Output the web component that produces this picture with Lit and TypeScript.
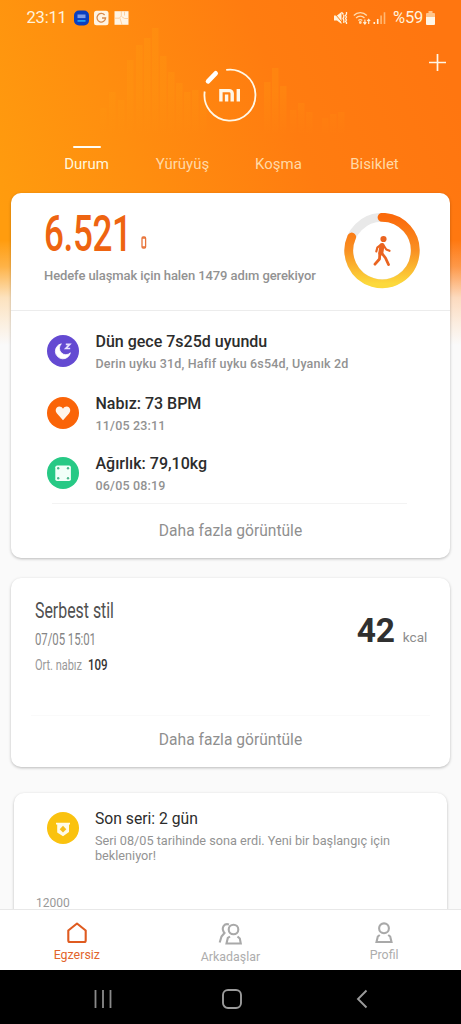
import { LitElement, html, svg, css } from "lit";
import { customElement } from "lit/decorators.js";

/** Text in a narrow face: laid out at its natural em width, then squeezed to the given width. */
const narrow = (text: string, size: number, width: number, ems: number, weight = 400) => html`
  <svg class="narrow" width=${width} height=${size} viewBox="0 0 ${size * ems} ${size}" preserveAspectRatio="none">
    <text x="0" y=${size * 0.86} font-size=${size} font-weight=${weight} textLength=${size * ems}>${text}</text>
  </svg>`;

/** [x, top] of each equaliser bar behind the logo */
const bars: number[][] = [
  [100, 108], [109, 92], [118, 100], [127, 60], [136, 45], [144, 38], [152, 28], [160, 56],
  [168, 72], [176, 83], [184, 92], [192, 90], [200, 100],
  [264, 82], [272, 68], [280, 86], [290, 110], [298, 103], [306, 112], [322, 118], [330, 114], [338, 112],
];

@customElement("app-root")
export class AppRoot extends LitElement {
  static styles = css`
    :host { display: block; font-family: Roboto, "Noto Sans", sans-serif; color: #8c8c8c; }
    * { box-sizing: border-box; }
    svg { display: block; flex: none; }
    .narrow { overflow: visible; fill: currentColor; }
    .screen { position: relative; display: flex; flex-direction: column; width: 461px; height: 1024px; overflow: hidden; background: #fafafa; }
    .backdrop { position: absolute; left: 0; top: 0; }
    .content { position: relative; height: 909px; overflow: hidden; }
    .status { display: flex; align-items: center; height: 36px; padding: 0 26px 0 26.5px; color: #fff2dc; font-size: 16.5px; line-height: 36px; }
    .clock { width: 47px; letter-spacing: -0.2px; }
    .apps { display: flex; gap: 5px; flex: 1; }
    .battery { width: 31px; margin: 0 2px 0 7px; white-space: nowrap; letter-spacing: -0.2px; }
    .head { display: flex; justify-content: flex-end; height: 109px; padding: 16px 14.5px 0 0; }
    .logo { margin: 14px 170.5px 0 0; }
    .tabs { display: grid; grid-template-columns: repeat(4, 96px); height: 47.5px; padding: 0 38.5px; font-size: 15px; color: #ffd9a6; text-align: center; }
    .tab { line-height: 20px; }
    .tab.on { color: #fff6dc; }
    .tab::before { content: ""; display: block; width: 28px; height: 2.5px; border-radius: 1px; margin: 0.5px auto 6px; }
    .tab.on::before { background: #fffdf5; }
    .card { margin: 0 11px; background: #fff; border-radius: 10px; box-shadow: 0 1px 3px rgba(0,0,0,.26); }
    .today { height: 365px; }
    .steps { display: flex; height: 118px; border-bottom: 1px solid #ececec; padding: 0 30px 0 33px; }
    .count { flex: 1; padding-top: 16px; }
    .figure { display: flex; align-items: flex-end; height: 49px; color: #ee6411; gap: 9px; }
    .band { margin-bottom: 9px; }
    .goal { margin-top: 8.5px; font-size: 13px; line-height: 20px; font-weight: 500; letter-spacing: -0.09px; color: #929292; white-space: nowrap; }
    .ring { margin-top: 20px; }
    .row { display: flex; gap: 16.5px; padding-left: 36px; height: 60px; }
    .row.first { height: 62px; }
    .title { font-size: 16px; line-height: 20px; font-weight: 500; color: #2c2c2c; margin-top: -3px; white-space: nowrap; }
    .sub { font-size: 12.5px; line-height: 16px; font-weight: 500; letter-spacing: 0.18px; color: #929292; margin-top: 3.5px; white-space: nowrap; }
    .rows { height: 192px; padding-top: 24.5px; }
    .rule { height: 1px; margin: 0 43px 0 41px; background: #f3f3f3; }
    .more { text-align: center; font-size: 15.6px; line-height: 24px; padding-top: 15.500px; color: #8f8f8f; }
    .workout { display: flex; flex-direction: column; height: 188.5px; margin-top: 20.5px; }
    .workout-top { display: flex; justify-content: space-between; height: 137px; padding: 0 22.5px 0 24px; }
    .name { color: #505050; margin-top: 20.5px; }
    .when { color: #858585; margin-top: 10.5px; }
    .pulse { display: flex; gap: 6px; color: #999; margin-top: 9.5px; }
    .pulse-value { color: #333; }
    .energy { display: flex; align-items: baseline; gap: 8px; margin-top: 33px; height: 40px; font-size: 13.5px; line-height: 40px; letter-spacing: 0.1px; }
    .kcal { font-size: 33.5px; font-weight: 700; color: #303030; letter-spacing: -0.2px; }
    .workout .rule { margin: 0 20px; background: #fafafa; }
    .workout .more { padding-top: 12px; }
    .streak { margin: 26.5px 14px 0; height: 150px; padding-top: 19px; }
    .streak .row { padding-left: 33px; gap: 16px; height: 78px; }
    .streak .title { font-weight: 400; font-size: 15.7px; margin-top: -3.5px; }
    .note { width: 320px; margin-top: 5.5px; font-size: 12.7px; line-height: 14.5px; color: #939393; }
    .axis { padding-left: 22px; font-size: 12px; line-height: 16px; color: #999; margin-top: 5px; }
    .nav { position: relative; display: grid; grid-template-columns: repeat(3, 153.67px); height: 61px; background: #fff; border-top: 1px solid #e8e8e8; font-size: 12.4px; line-height: 16px; color: #adadad; }
    .item { display: flex; flex-direction: column; align-items: center; padding-top: 12px; gap: 2.5px; }
    .item.on { color: #e2642c; }
    .item.mid { padding-top: 12.5px; gap: 4px; }
    .system { position: relative; display: flex; justify-content: space-between; align-items: center; height: 54px; background: #000; padding: 3px 93px 0 93px; }
    .system-home { margin-right: 4px; }
  `;

  private disc(color: string, glyph: unknown) {
    return html`<svg width="32" height="32" viewBox="0 0 32 32"><circle cx="16" cy="16" r="16" fill=${color}></circle>${glyph}</svg>`;
  }

  private backdrop() {
    return html`<svg class="backdrop" width="461" height="345" viewBox="0 0 461 345">
      <defs>
        <linearGradient id="warm" x1="0" y1="0.6" x2="1" y2="0.3">
          <stop offset="0" stop-color="#ff9c0e"></stop><stop offset=".3" stop-color="#ff8e0f"></stop>
          <stop offset=".65" stop-color="#ff7c10"></stop><stop offset="1" stop-color="#ff7610"></stop>
        </linearGradient>
        <linearGradient id="fade" x1="0" y1="0" x2="0" y2="1">
          <stop offset="0" stop-color="#fafafa" stop-opacity="0"></stop>
          <stop offset=".25" stop-color="#fbf6f0" stop-opacity=".25"></stop>
          <stop offset=".55" stop-color="#fbf6f0" stop-opacity=".78"></stop>
          <stop offset=".8" stop-color="#fbf6f0" stop-opacity=".93"></stop>
          <stop offset="1" stop-color="#fafafa"></stop>
        </linearGradient>
        <linearGradient id="bar" gradientUnits="userSpaceOnUse" x1="0" y1="28" x2="0" y2="135">
          <stop offset="0" stop-color="#ff9c10" stop-opacity=".3"></stop><stop offset=".6" stop-color="#ff9c10" stop-opacity=".24"></stop><stop offset="1" stop-color="#ff9c10" stop-opacity="0"></stop>
        </linearGradient>
      </defs>
      <rect width="461" height="345" fill="url(#warm)"></rect>
      ${bars.map(([x, top]) => svg`<rect x=${x} y=${top} width="6.5" height=${135 - top} fill="url(#bar)"></rect>`)}
      <rect y="240" width="461" height="105" fill="url(#fade)"></rect>
    </svg>`;
  }

  private status() {
    return html`<div class="status">
      <span class="clock">23:11</span>
      <div class="apps">
        <svg width="15" height="16" viewBox="0 0 15 16"><rect y=".5" width="15" height="15" rx="5" fill="#0b3fc0"></rect><rect x="3.5" y="4.5" width="8" height="3.6" fill="#7f9ce6"></rect><rect x="3.5" y="10" width="8" height="1.8" fill="#1fa0f5"></rect></svg>
        <svg width="15" height="16" viewBox="0 0 15 16"><rect y=".8" width="14.5" height="14.4" rx="2.5" fill="#fff4e4"></rect><path d="M10.6 5A4.3 4.3 0 1 0 11.6 8H8" fill="none" stroke="#d88a4c" stroke-width="1.3"></path></svg>
        <svg width="15" height="16" viewBox="0 0 15 16"><path d="M.5 1.2h14v13.6H.5z" fill="#fff4e4"></path><path d="M7.3 1v5l-2 2.2H.5M6 8.2l2 6.6M7.5 6.5l3 2h4M10.5 1.5v4" fill="none" stroke="#ffc68d" stroke-width=".8"></path></svg>
      </div>
      <svg width="20" height="16" viewBox="0 0 20 16" fill="#fff2dc"><path d="M1 5.500h3L8.500 2v12L4 10.500H1z"></path><path d="M0 1.500l11 13" stroke="#ff8010" stroke-width="1"></path><path d="M8.500 2.200l2 2.300" stroke="#fff2dc" stroke-width="1.300"></path><path d="M10.800 5v2l-.8 1.500.8 1.500v3M13.500 2v2l-1 1.500 1 1.500-1 1.500 1 1.500-1 1.500 1 1V14" fill="none" stroke="#fff2dc" stroke-width="1.300"></path></svg>
      <svg width="20" height="16" viewBox="0 0 20 16" fill="none" stroke="#ffdcae" stroke-width="1.300"><path d="M.8 5.500a9 9 0 0 1 13 0M3.100 8a5.800 5.800 0 0 1 8.400 0M5.300 10.500a3 3 0 0 1 4 0"></path><circle cx="7.300" cy="12.500" r=".8" fill="#fff2dc"></circle><path d="M11.900 9.500v4.300M10.400 12.200l1.500 1.800 1.400-1.800M15.700 14V9.500M14.200 11l1.500-1.700 1.500 1.700" stroke="#fff2dc" stroke-width="1.100"></path></svg>
      <svg width="13" height="16" viewBox="0 0 13 16"><path d="M.5 12h1.600v2H.5zM3.900 9h1.600v5H3.900z" fill="#fff2dc"></path><path d="M7.300 5.500h1.600V14H7.300zM10.700 2.200h1.600V14h-1.600z" fill="#ffb873"></path></svg>
      <span class="battery">%59</span>
      <svg width="9" height="16" viewBox="0 0 9 16"><path d="M2.500 1h4v2H8a1 1 0 0 1 1 1v3H0V4a1 1 0 0 1 1-1h1.500z" fill="#ffc48a"></path><path d="M0 7h9v7a1 1 0 0 1-1 1H1a1 1 0 0 1-1-1z" fill="#fff6e8"></path></svg>
    </div>`;
  }

  render() {
    return html`<div class="screen">
      ${this.backdrop()}
      <div class="content">
        ${this.status()}
        <div class="head">
          <svg class="logo" width="56" height="58" viewBox="202 66 56 58">
            <path d="M227.200 69.900A25.500 25.500 0 1 1 205.700 91.500" fill="none" stroke="#fff8e8" stroke-width="1.800"></path>
            <path d="M209 81.300L216.700 73.300" stroke="#fff" stroke-width="4.600" stroke-linecap="round"></path>
            <path d="M221.900 101.500V90.600H230.200a3 3 0 0 1 3 3v7.900M227.600 94.500v7M239.300 89v12.500" fill="none" stroke="#fff6e6" stroke-width="3.400"></path>
          </svg>
          <svg width="19" height="20" viewBox="0 0 19 20"><path d="M9.500 2v17M1 10.500h17" stroke="#fff6e6" stroke-width="1.700"></path></svg>
        </div>
        <div class="tabs">
          ${["Durum", "Yürüyüş", "Koşma", "Bisiklet"].map((name, i) => html`<div class="tab ${i ? "" : "on"}">${name}</div>`)}
        </div>

        <section class="card today">
          <div class="steps">
            <div class="count">
              <div class="figure">
                ${narrow("6.521", 50, 88, 2.51, 500)}
                <svg class="band" width="6" height="13" viewBox="0 0 6 13"><rect x="1" y="1" width="3.600" height="11" rx="1.200" fill="#fff" stroke="#e8743a" stroke-width="1.300"></rect><path d="M1 2h3.600M1 11h3.600" stroke="#e8743a" stroke-width="1.500"></path></svg>
              </div>
              <div class="goal">Hedefe ulaşmak için halen 1479 adım gerekiyor</div>
            </div>
            <svg class="ring" width="76" height="76" viewBox="0 0 76 76">
              <defs><linearGradient id="heat" x1="0" y1="0" x2="0" y2="1"><stop offset="0" stop-color="#fb6a0b"></stop><stop offset=".5" stop-color="#f99022"></stop><stop offset="1" stop-color="#fcd93c"></stop></linearGradient></defs>
              <circle cx="38" cy="37.500" r="33.200" fill="none" stroke="#e9e9e9" stroke-width="8.800"></circle>
              <path d="M38 4.300A33.200 33.200 0 1 1 7.700 24" fill="none" stroke="url(#heat)" stroke-width="8.800" stroke-linecap="round"></path>
              <g fill="none" stroke="#ea6420" stroke-linecap="round" stroke-linejoin="round">
                <circle cx="39.500" cy="26" r="3.100" fill="#ea6420" stroke="none"></circle>
                <path d="M38 32.500L36.800 40" stroke-width="5"></path>
                <path d="M36.500 32L33.300 34.700 32.300 38.500M40 33l2.300 3.500 3.200 1.300" stroke-width="2.200"></path>
                <path d="M35.800 40.500L35.500 46 31 51.200M38 40.500l3.500 4.500 3 6.500" stroke-width="2.800"></path>
              </g>
            </svg>
          </div>
          <div class="rows">
            <div class="row first">
              ${this.disc("#644ad2", svg`<path d="M14.300 8.800A7.600 7.600 0 1 0 23.400 17.800 6 6 0 0 1 14.300 8.800Z" fill="#fff" stroke="#fff" stroke-width=".8"></path><path d="M18.800 9.300h4l-4 4.200h4.400" fill="none" stroke="#e8e2ff" stroke-width="1.700"></path>`)}
              <div><div class="title">Dün gece 7s25d uyundu</div><div class="sub">Derin uyku 31d, Hafif uyku 6s54d, Uyanık 2d</div></div>
            </div>
            <div class="row">
              ${this.disc("#fa6408", svg`<path d="M16 23.300L10 16.500C7.500 13.500 9 9.500 12.200 9.500c1.700 0 3 .9 3.800 2.300.8-1.400 2.100-2.300 3.800-2.300 3.200 0 4.700 4 2.200 7z" fill="#fff5ec"></path>`)}
              <div><div class="title">Nabız: 73 BPM</div><div class="sub">11/05 23:11</div></div>
            </div>
            <div class="row">
              ${this.disc("#27c985", svg`<rect x="8.300" y="8.500" width="15.600" height="15.600" rx="1.800" fill="#f1fff8"></rect><g fill="#4cb98c"><circle cx="11.200" cy="11.300" r="1.200"></circle><circle cx="21" cy="11.300" r="1.200"></circle><circle cx="11.200" cy="21.200" r="1.200"></circle><circle cx="21" cy="21.200" r="1.200"></circle></g>`)}
              <div><div class="title">Ağırlık: 79,10kg</div><div class="sub">06/05 08:19</div></div>
            </div>
          </div>
          <div class="rule"></div>
          <div class="more">Daha fazla görüntüle</div>
        </section>

        <section class="card workout">
          <div class="workout-top">
            <div>
              <div class="name">${narrow("Serbest stil", 22, 79, 4.97)}</div>
              <div class="when">${narrow("07/05 15:01", 16, 61, 5.35)}</div>
              <div class="pulse">${narrow("Ort. nabız", 15.5, 47, 4.26)}<span class="pulse-value">${narrow("109", 15.5, 19.5, 1.685, 500)}</span></div>
            </div>
            <div class="energy"><span class="kcal">42</span><span>kcal</span></div>
          </div>
          <div class="rule"></div>
          <div class="more">Daha fazla görüntüle</div>
        </section>

        <section class="card streak">
          <div class="row">
            ${this.disc("#fac20f", svg`<path d="M9 10.700h14v1.800h-1V20L16 24.300 10.200 20.500V12.500H9z" fill="#fffbe8"></path><path d="M16 13.800l3.300 3.400L16 20.600l-3.300-3.400z" fill="#f6be1c"></path>`)}
            <div><div class="title">Son seri: 2 gün</div><div class="note">Seri 08/05 tarihinde sona erdi. Yeni bir başlangıç için bekleniyor!</div></div>
          </div>
          <div class="axis">12000</div>
        </section>
      </div>

      <nav class="nav">
        <div class="item on">
          <svg width="20" height="22" viewBox="0 0 20 22"><path d="M1.300 8.500L10 1.500l8.700 7V18.500a1.500 1.500 0 0 1-1.500 1.500H2.800a1.500 1.500 0 0 1-1.500-1.500z" fill="none" stroke="#df5b20" stroke-width="2.100" stroke-linejoin="round"></path></svg>
          <span>Egzersiz</span>
        </div>
        <div class="item mid">
          <svg width="24" height="22" viewBox="0 0 24 22" fill="none" stroke="#a9a9a9" stroke-width="2.100"><circle cx="15.500" cy="6.500" r="4.800"></circle><path d="M12 13.500L9.800 15 8.500 20.500H22.800L21.800 15.500 19.500 13.500M11 1.500C6 0 3.800 4.500 5.300 8 5.600 9 6.500 10 6.500 10L3.500 13.500 1.700 19.500"></path></svg>
          <span>Arkadaşlar</span>
        </div>
        <div class="item">
          <svg width="18" height="22" viewBox="0 0 18 22" fill="none" stroke="#a9a9a9" stroke-width="2.100"><circle cx="9" cy="6.300" r="4.900"></circle><path d="M4.800 13L2.800 14.500 1.500 20h15L15.200 14.500 13.200 13"></path></svg>
          <span>Profil</span>
        </div>
      </nav>
      <div class="system">
        <svg width="20" height="20" viewBox="0 0 20 20"><path d="M2.500 1v18M10 1v18M17.500 1v18" stroke="#8a8a8a" stroke-width="1.800"></path></svg>
        <svg class="system-home" width="22" height="20" viewBox="0 0 22 20"><rect x="2" y="1" width="18" height="18" rx="5" fill="none" stroke="#9b9b9b" stroke-width="1.900"></rect></svg>
        <svg width="13" height="20" viewBox="0 0 13 20"><path d="M11.500 1.500L3 10l8.500 8.500" fill="none" stroke="#9b9b9b" stroke-width="1.900"></path></svg>
      </div>
    </div>`;
  }
}
